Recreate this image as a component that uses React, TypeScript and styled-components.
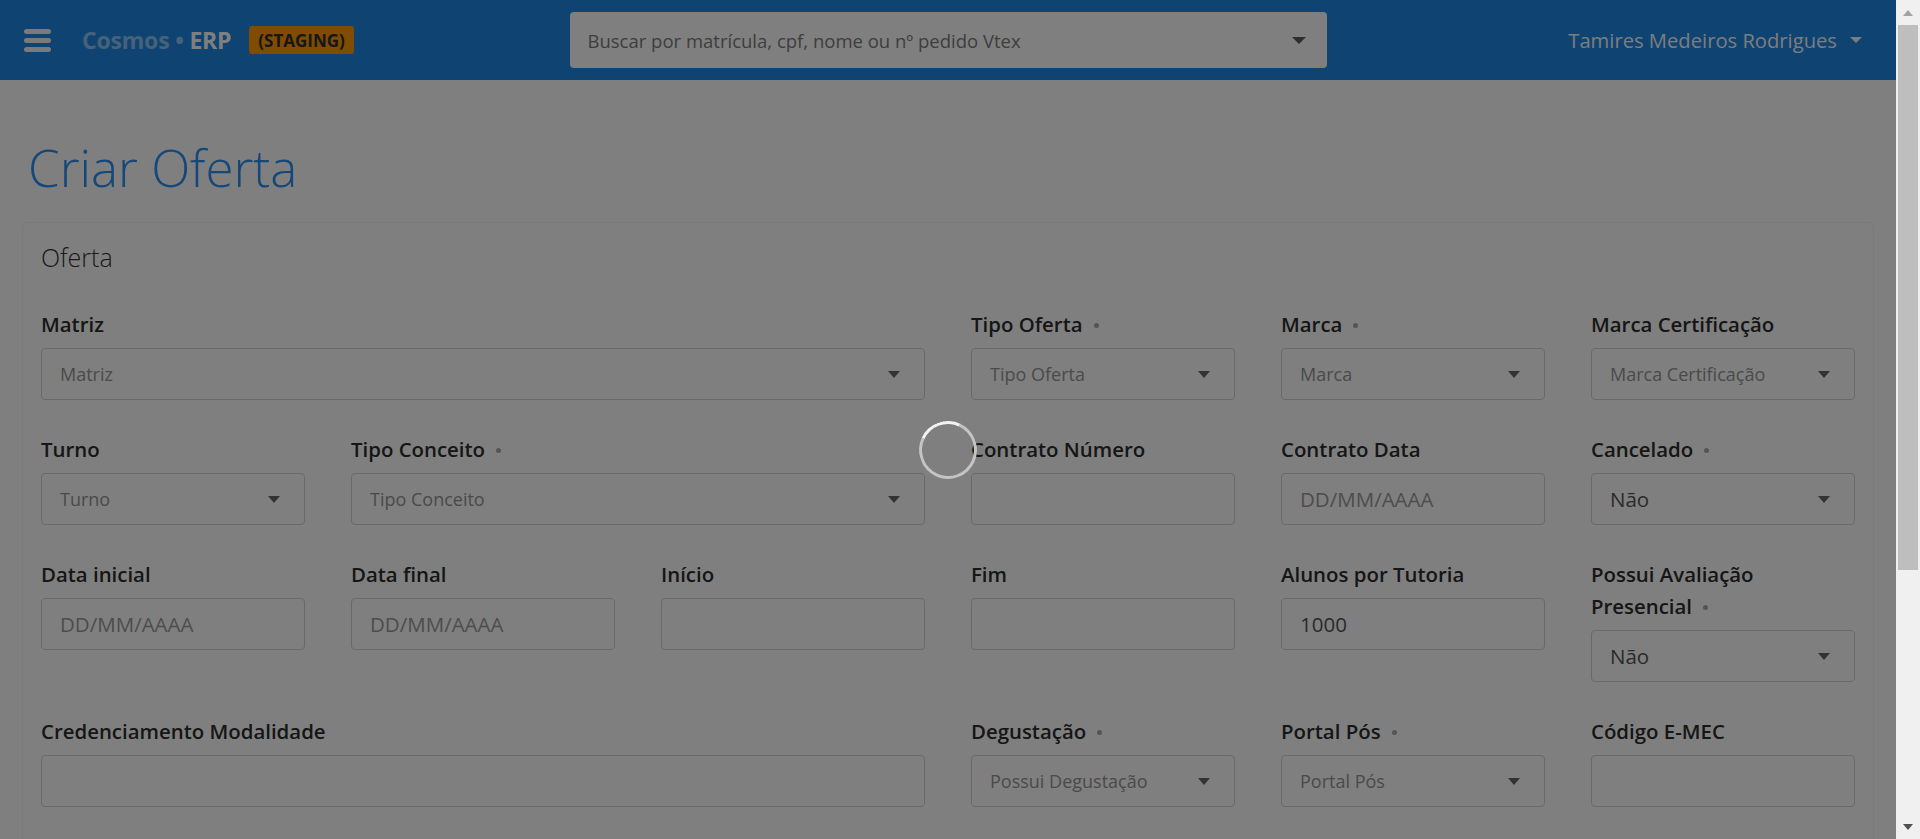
import React from "react";
import styled, { createGlobalStyle, keyframes } from "styled-components";

const GlobalStyle = createGlobalStyle`
  html, body { margin: 0; padding: 0; }
  body {
    font-family: "Open Sans", "Noto Sans", sans-serif;
    background: #ffffff;
    color: #333333;
  }
  *, *::before, *::after { box-sizing: border-box; }
`;

const Shell = styled.div`
  display: flex;
  align-items: flex-start;
  min-height: 100vh;
`;

const Page = styled.div`
  flex: 1;
  min-width: 0;
`;

/* browser scrollbar of the reference */
const ScrollRail = styled.div`
  flex: 0 0 24px;
  position: sticky;
  top: 0;
  height: 100vh;
  background: #f0f0f0;
  display: flex;
  flex-direction: column;
`;

const ScrollButton = styled.div`
  height: 25px;
  display: flex;
  align-items: center;
  justify-content: center;
`;

const ScrollArrow = styled.span<{ $down?: boolean }>`
  width: 0;
  height: 0;
  border-left: 5.5px solid transparent;
  border-right: 5.5px solid transparent;
  ${(p) =>
    p.$down
      ? "border-top: 6px solid #505050;"
      : "border-bottom: 6px solid #a3a3a3;"}
`;

const ScrollTrack = styled.div`
  flex: 1;
  padding: 0 2px;
`;

const ScrollThumb = styled.div`
  height: 545px;
  background: #bebebe;
`;

const Header = styled.header`
  height: 80px;
  background: #1e88e5;
  display: grid;
  grid-template-columns: 1fr 757px 1fr;
  align-items: center;
  padding: 0 24px;
`;

const HeaderLeft = styled.div`
  display: flex;
  align-items: center;
`;

const MenuButton = styled.button`
  border: 0;
  background: transparent;
  padding: 0;
  width: 27px;
  height: 23px;
  display: flex;
  cursor: pointer;
`;

const Brand = styled.div`
  margin-left: 31px;
  font-size: 23px;
  font-weight: 700;
  color: #ffffff;
  white-space: nowrap;
  letter-spacing: -0.2px;
`;

const BrandMuted = styled.span`
  color: rgba(255, 255, 255, 0.5);
`;

const Badge = styled.span`
  margin-left: 18px;
  height: 28px;
  padding: 0 9px;
  display: inline-flex;
  align-items: center;
  background: #ff9800;
  border-radius: 3px;
  font-size: 17px;
  font-weight: 700;
  color: #2e2e2e;
`;

const SearchBox = styled.div`
  height: 56px;
  background: #ffffff;
  border-radius: 4px;
  display: flex;
  align-items: center;
  padding: 0 21px 0 18px;
  font-size: 18.5px;
  color: #7c7c7c;
`;

const SearchText = styled.span`
  flex: 1;
`;

const Caret = styled.span<{ $color?: string; $w?: number; $h?: number }>`
  width: 0;
  height: 0;
  border-left: ${(p) => (p.$w ?? 12) / 2}px solid transparent;
  border-right: ${(p) => (p.$w ?? 12) / 2}px solid transparent;
  border-top: ${(p) => p.$h ?? 7}px solid ${(p) => p.$color ?? "#666666"};
  flex-shrink: 0;
`;

const UserMenu = styled.div`
  justify-self: end;
  display: flex;
  align-items: center;
  gap: 13px;
  padding-right: 10px;
  font-size: 20.2px;
  color: rgba(255, 255, 255, 0.97);
  white-space: nowrap;
`;

const Main = styled.main`
  padding: 57px 22px 40px;
`;

const Title = styled.h1`
  margin: 0 0 25px 6px;
  font-size: 51px;
  font-weight: 300;
  line-height: 60px;
  color: #2a8ff0;
`;

const Card = styled.section`
  border: 1px solid #f4f4f4;
  border-radius: 4px;
  padding: 18px 18px 40px;
`;

const CardTitle = styled.h2`
  margin: 0 0 35px 0;
  font-size: 25px;
  font-weight: 300;
  line-height: 32px;
  color: #333333;
`;

const FormGrid = styled.div`
  display: grid;
  grid-template-columns: repeat(6, minmax(0, 1fr));
  column-gap: 46px;
  row-gap: 33px;
  align-items: start;
`;

const Field = styled.div<{ $span?: number }>`
  grid-column: span ${(p) => p.$span ?? 1};
  display: flex;
  flex-direction: column;
  min-width: 0;
`;

const Label = styled.label`
  font-size: 20.4px;
  font-weight: 600;
  line-height: 32px;
  color: #2c2c2c;
  margin-bottom: 8px;
`;

const NoWrap = styled.span`
  white-space: nowrap;
`;

const Required = styled.span`
  display: inline-block;
  width: 5px;
  height: 5px;
  border-radius: 50%;
  background: #a8a8a8;
  margin-left: 11px;
  vertical-align: 4px;
`;

const TextInput = styled.input`
  height: 52px;
  width: 100%;
  border: 1px solid #d2d2d2;
  border-radius: 4px;
  padding: 0 18px;
  font-family: inherit;
  font-size: 20.5px;
  color: #555555;
  background: #ffffff;
  outline: none;
  &::placeholder { color: #9a9a9a; }
`;

const SelectBox = styled.div`
  height: 52px;
  border: 1px solid #d2d2d2;
  border-radius: 4px;
  padding: 0 24px 0 18px;
  display: flex;
  align-items: center;
  background: #ffffff;
`;

const SelectValue = styled.span<{ $placeholder?: boolean }>`
  flex: 1;
  font-size: ${(p) => (p.$placeholder ? "18px" : "20.5px")};
  color: ${(p) => (p.$placeholder ? "#959595" : "#555555")};
  white-space: nowrap;
  overflow: hidden;
`;

const spin = keyframes`
  from { transform: rotate(-20deg); }
  to { transform: rotate(340deg); }
`;

const Overlay = styled.div`
  position: fixed;
  top: 0;
  left: 0;
  bottom: 0;
  right: 24px;
  background: rgba(0, 0, 0, 0.5);
  z-index: 1000;
`;

const Spinner = styled.div`
  position: absolute;
  left: calc(50% - 29px);
  top: 421px;
  width: 58px;
  height: 58px;
  border-radius: 50%;
  border: 3px solid #c4c4c4;
  border-top-color: #f2f2f2;
  transform: rotate(-20deg);
  animation: ${spin} 1s linear infinite;
  animation-play-state: paused;
`;

type FieldDef = {
  label: string;
  required?: boolean;
  span?: number;
  kind: "select" | "input";
  placeholder?: string;
  value?: string;
};

const fields: FieldDef[] = [
  { label: "Matriz", span: 3, kind: "select", placeholder: "Matriz" },
  { label: "Tipo Oferta", required: true, kind: "select", placeholder: "Tipo Oferta" },
  { label: "Marca", required: true, kind: "select", placeholder: "Marca" },
  { label: "Marca Certificação", kind: "select", placeholder: "Marca Certificação" },
  { label: "Turno", kind: "select", placeholder: "Turno" },
  { label: "Tipo Conceito", required: true, span: 2, kind: "select", placeholder: "Tipo Conceito" },
  { label: "Contrato Número", kind: "input" },
  { label: "Contrato Data", kind: "input", placeholder: "DD/MM/AAAA" },
  { label: "Cancelado", required: true, kind: "select", value: "Não" },
  { label: "Data inicial", kind: "input", placeholder: "DD/MM/AAAA" },
  { label: "Data final", kind: "input", placeholder: "DD/MM/AAAA" },
  { label: "Início", kind: "input" },
  { label: "Fim", kind: "input" },
  { label: "Alunos por Tutoria", kind: "input", value: "1000" },
  { label: "Possui Avaliação Presencial", required: true, kind: "select", value: "Não" },
  { label: "Credenciamento Modalidade", span: 3, kind: "input" },
  { label: "Degustação", required: true, kind: "select", placeholder: "Possui Degustação" },
  { label: "Portal Pós", required: true, kind: "select", placeholder: "Portal Pós" },
  { label: "Código E-MEC", kind: "input" },
];

const MenuIcon = () => (
  <svg width="27" height="23" viewBox="0 0 27 23">
    <g stroke="#f4f4f4" strokeWidth="5" strokeLinecap="round">
      <line x1="2.5" y1="2.5" x2="24.5" y2="2.5" />
      <line x1="2.5" y1="11.5" x2="24.5" y2="11.5" />
      <line x1="2.5" y1="20.5" x2="24.5" y2="20.5" />
    </g>
  </svg>
);

function FieldLabel({ text, required }: { text: string; required?: boolean }) {
  const words = text.split(" ");
  const last = words.pop();
  const head = words.length ? words.join(" ") + " " : "";
  return (
    <Label>
      {head}
      <NoWrap>
        {last}
        {required && <Required />}
      </NoWrap>
    </Label>
  );
}

export default function App() {
  return (
    <>
      <GlobalStyle />
      <Shell>
        <Page>
          <Header>
            <HeaderLeft>
              <MenuButton aria-label="Menu">
                <MenuIcon />
              </MenuButton>
              <Brand>
                <BrandMuted>Cosmos • </BrandMuted>ERP
              </Brand>
              <Badge>(STAGING)</Badge>
            </HeaderLeft>
            <SearchBox>
              <SearchText>Buscar por matrícula, cpf, nome ou nº pedido Vtex</SearchText>
              <Caret $w={15} $h={7} $color="#5c5c5c" />
            </SearchBox>
            <UserMenu>
              Tamires Medeiros Rodrigues
              <Caret $w={12} $h={6} $color="rgba(255,255,255,0.95)" />
            </UserMenu>
          </Header>
          <Main>
            <Title>Criar Oferta</Title>
            <Card>
              <CardTitle>Oferta</CardTitle>
              <FormGrid>
                {fields.map((f) => (
                  <Field key={f.label} $span={f.span}>
                    <FieldLabel text={f.label} required={f.required} />
                    {f.kind === "input" ? (
                      <TextInput placeholder={f.placeholder} defaultValue={f.value} />
                    ) : (
                      <SelectBox>
                        <SelectValue $placeholder={!f.value}>{f.value ?? f.placeholder}</SelectValue>
                        <Caret />
                      </SelectBox>
                    )}
                  </Field>
                ))}
              </FormGrid>
            </Card>
          </Main>
        </Page>
        <ScrollRail>
          <ScrollButton>
            <ScrollArrow />
          </ScrollButton>
          <ScrollTrack>
            <ScrollThumb />
          </ScrollTrack>
          <ScrollButton>
            <ScrollArrow $down />
          </ScrollButton>
        </ScrollRail>
      </Shell>
      <Overlay>
        <Spinner />
      </Overlay>
    </>
  );
}
